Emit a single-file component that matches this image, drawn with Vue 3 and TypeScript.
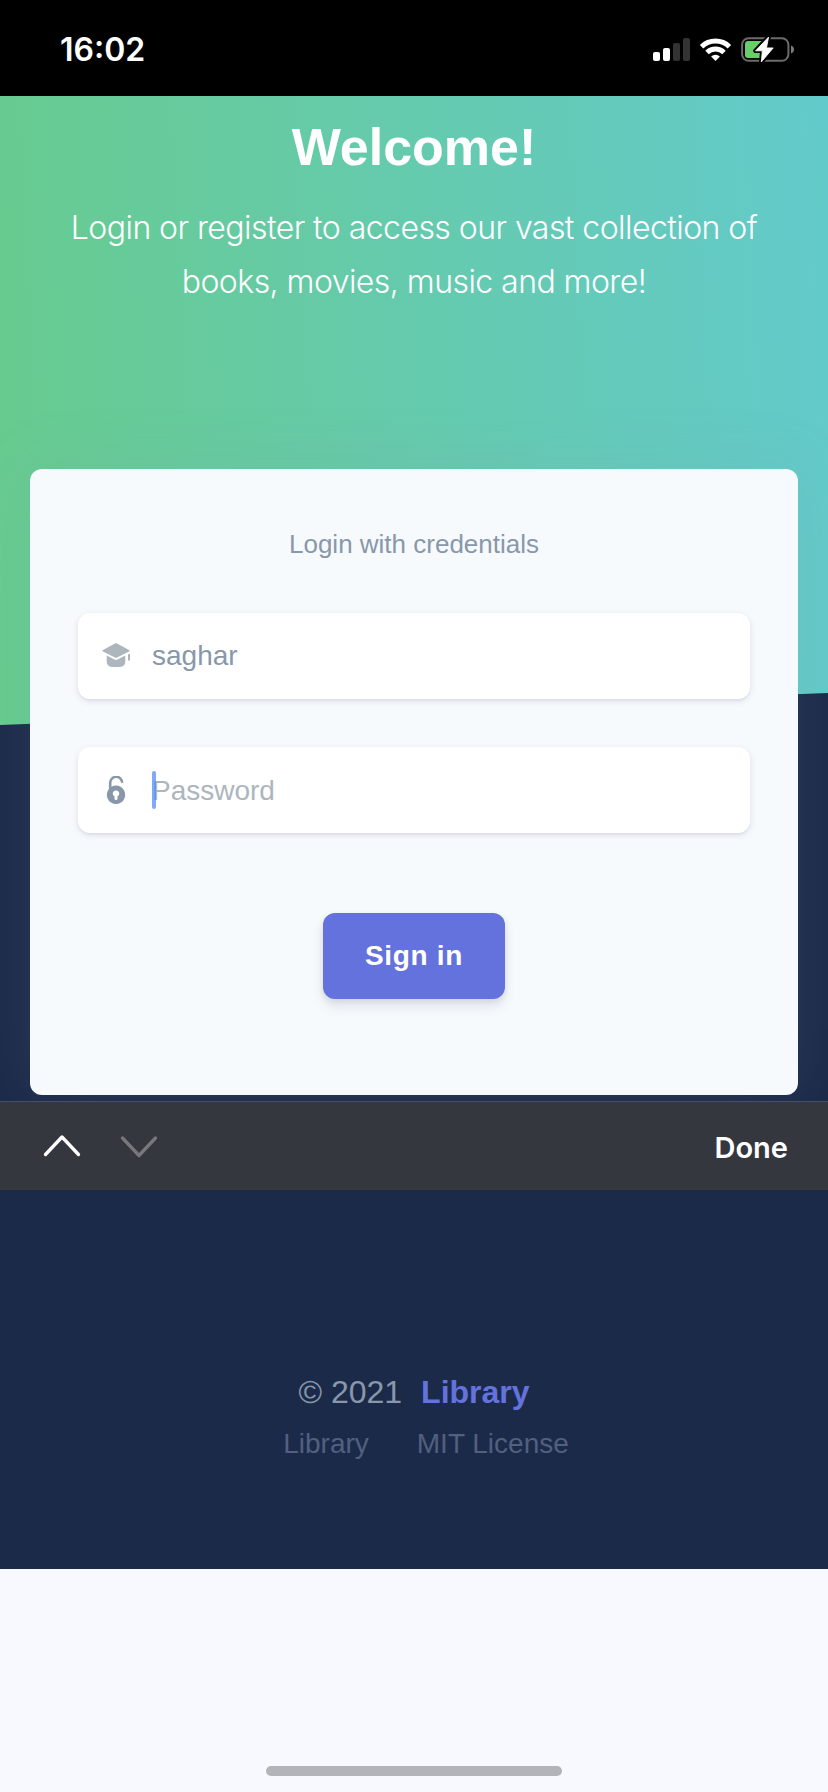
<script setup lang="ts">
import { ref } from 'vue'

const username = ref('saghar')
const links: string[] = ['Library', 'MIT License']
</script>

<template>
  <div class="screen">
    <header class="status">
      <span class="time">16:02</span>
      <svg class="status-icons" width="144" height="30" viewBox="0 0 144 30">
        <rect x="0" y="17" width="7" height="9" rx="2" fill="#fff" />
        <rect x="10" y="13" width="7" height="13" rx="2" fill="#fff" />
        <rect x="20" y="8" width="7" height="18" rx="2" fill="#333" />
        <rect x="30" y="3" width="7" height="23" rx="2" fill="#333" />
        <path d="M62.5 26l-4.4-4.4a6.3 6.3 0 0 1 8.8 0z" fill="#fff" />
        <path d="M54 17.5a12.3 12.3 0 0 1 17 0M48.600 11.700a20 20 0 0 1 27.800 0" fill="none" stroke="#fff" stroke-width="5" />
        <rect x="89.100" y="3.200" width="46.300" height="22.600" rx="6.500" fill="none" stroke="#6b6b6b" stroke-width="2" />
        <path d="M138 10.500q3 1.200 3 4t-3 4z" fill="#7b7b7b" />
        <path d="M95 6h14v17H95q-3 0-3-3V9q0-3 3-3z" fill="#68ce67" />
        <path d="M115.600 2L102.500 15.800h6.800L108.300 27L120.200 12.900h-6.700z" fill="#000" stroke="#000" stroke-width="4.500" stroke-linejoin="round" />
        <path d="M115.600 2L102.500 15.800h6.800L108.300 27L120.200 12.900h-6.700z" fill="#fff" stroke="#fff" stroke-width="0.800" stroke-linejoin="round" />
      </svg>
    </header>

    <main class="page">
      <svg class="skew" viewBox="0 0 828 32" width="828" height="32" preserveAspectRatio="none">
        <polygon points="0,32 828,0 828,32" fill="#1c2a4a" />
      </svg>
      <section class="intro">
        <h1>Welcome!</h1>
        <p>Login or register to access our vast collection of<br />books, movies, music and more!</p>
      </section>

      <form class="card" @submit.prevent>
        <div class="hint">Login with credentials</div>
        <label class="field">
          <svg width="28" height="26" viewBox="0 0 28 26">
            <path d="M1 7L13 .6q1-.5 2 0L27 7q1.500.8 0 1.600L15 14.500q-1 .5-2 0L1 8.600q-1.500-.8 0-1.600z" />
            <path d="M4.700 12.500L12.500 16.500q1.500.8 3 0L23.300 12.500V18.500q0 5.500-7 5.500h-4.600q-7 0-7-5.500z" />
            <path d="M26 11.500l2-1V17.500h-2z" />
          </svg>
          <input v-model="username" type="text" aria-label="Username" />
        </label>
        <label class="field">
          <svg class="lock" width="28" height="28" viewBox="0 0 28 28">
            <path d="M8.200 14V6.800a6 6 0 0 1 12 0" fill="none" stroke="#8898aa" stroke-width="2.600" />
            <path fill-rule="evenodd" d="M14 9.600a9.200 9.200 0 1 0 .01 0zM14 14.500a3 3 0 0 1 1.500 5.700V22.500a1.500 1.500 0 0 1-3 0V20.200A3 3 0 0 1 14 14.500z" />
          </svg>
          <span class="entry">
            <input class="secret" type="password" placeholder="Password" />
            <i class="caret"></i>
          </span>
        </label>
        <button type="button">Sign in</button>
      </form>
    </main>

    <div class="toolbar">
      <svg width="118" height="30" viewBox="0 0 118 30" fill="none" stroke-width="3.300" stroke-linecap="round" stroke-linejoin="round">
        <path d="M2.500 23.500L19 6L35.500 23.500" stroke="#fff" />
        <path d="M79.500 7L96 24.500L112.500 7" stroke="#77787b" />
      </svg>
      <span class="done">Done</span>
    </div>

    <footer class="foot">
      <div class="copy"><span>© 2021</span><b>Library</b></div>
      <nav><a v-for="l in links" :key="l">{{ l }}</a></nav>
    </footer>
    <div class="bottom"><div class="home"></div></div>
  </div>
</template>

<style>
body {
  background: #f8f9fe;
}
</style>

<style scoped>
.screen {
  width: 828px;
  height: 1792px;
  overflow: hidden;
  display: flex;
  flex-direction: column;
  font-family: "Liberation Sans", Arial, sans-serif;
  background: #f8f9fe;
}
.status {
  height: 96px;
  flex: none;
  box-sizing: border-box;
  background: #000;
  display: flex;
  justify-content: space-between;
  padding: 30px 31px 0 60px;
}
.time {
  font: 600 32px/40px Inter, sans-serif;
  color: #fff;
}
.status-icons {
  margin-top: 5px;
}
.page {
  position: relative;
  height: 1005px;
  flex: none;
  overflow: hidden;
  background: linear-gradient(#1c2a4a, #1c2a4a) 0 629px / 100% 400px no-repeat,
    linear-gradient(87deg, #67cb8e, #63cacb) 0 0 / 100% 629px no-repeat;
}
.skew {
  position: absolute;
  left: 0;
  top: 597px;
}
.intro {
  height: 373px;
  text-align: center;
  color: #fff;
}
h1 {
  margin: 0;
  padding-top: 13px;
  font-size: 52px;
  line-height: 76px;
}
p {
  margin: 16px 0 0;
  font: 300 32px/54px Inter, sans-serif;
  letter-spacing: -0.55px;
  white-space: nowrap;
}
.card {
  position: relative;
  box-sizing: border-box;
  width: 768px;
  height: 626px;
  margin: 0 auto;
  padding: 55px 48px 0;
  border-radius: 12px;
  background: #f7fafd;
  box-shadow: 0 0 64px rgba(136, 152, 170, 0.15);
  display: flex;
  flex-direction: column;
  align-items: center;
}
.hint {
  margin-bottom: 1px;
  font-size: 26px;
  line-height: 40px;
  color: #8898aa;
}
.field {
  box-sizing: border-box;
  width: 672px;
  height: 86px;
  margin-top: 48px;
  padding: 0 24px;
  border-radius: 12px;
  background: #fff;
  box-shadow: 0 2px 6px rgba(50, 50, 93, 0.15), 0 2px 0 rgba(0, 0, 0, 0.02);
  display: flex;
  align-items: center;
  gap: 22px;
}
.field svg {
  fill: #adb5bd;
}
.field .lock {
  fill: #8898aa;
}
input {
  width: 560px;
  padding: 0;
  border: 0;
  outline: 0;
  background: none;
  font: 28px/40px "Liberation Sans", Arial, sans-serif;
  color: #8898aa;
}
.secret {
  padding-top: 1px;
}
input::placeholder {
  color: #adb5bd;
  opacity: 1;
}
.entry {
  position: relative;
}
.caret {
  position: absolute;
  left: 0;
  top: 1px;
  width: 4px;
  height: 38px;
  border-radius: 2px;
  background: #4a86f7b3;
}
button {
  width: 182px;
  height: 86px;
  margin-top: 80px;
  padding: 0;
  border: 0;
  border-radius: 12px;
  background: #6372dc;
  color: #fff;
  font: bold 28px/40px "Liberation Sans", Arial, sans-serif;
  letter-spacing: 0.7px;
  box-shadow: 0 8px 12px rgba(50, 50, 93, 0.11), 0 2px 6px rgba(0, 0, 0, 0.08);
}
.toolbar {
  height: 89px;
  flex: none;
  box-sizing: border-box;
  border-top: 1px solid #45506a;
  background: #35373f;
  display: flex;
  align-items: center;
  justify-content: space-between;
  padding: 0 40px 0 43px;
}
.done {
  padding-top: 3px;
  font: 600 29px/40px Inter, sans-serif;
  color: #fff;
}
.foot {
  height: 379px;
  flex: none;
  box-sizing: border-box;
  background: #1c2a4a;
  padding-top: 175px;
  text-align: center;
}
.copy {
  display: flex;
  justify-content: center;
  gap: 19px;
  font-size: 32px;
  line-height: 54px;
  color: #8898aa;
}
.copy b {
  color: #6372dc;
}
nav {
  display: flex;
  justify-content: center;
  gap: 48px;
  padding: 1px 0 0 24px;
  font-size: 28px;
  line-height: 48px;
  color: #525f7f;
}
.bottom {
  flex: 1;
  display: flex;
  justify-content: center;
  align-items: flex-end;
  padding-bottom: 16px;
}
.home {
  width: 296px;
  height: 10px;
  border-radius: 5px;
  background: #b3b4b7;
}
</style>
